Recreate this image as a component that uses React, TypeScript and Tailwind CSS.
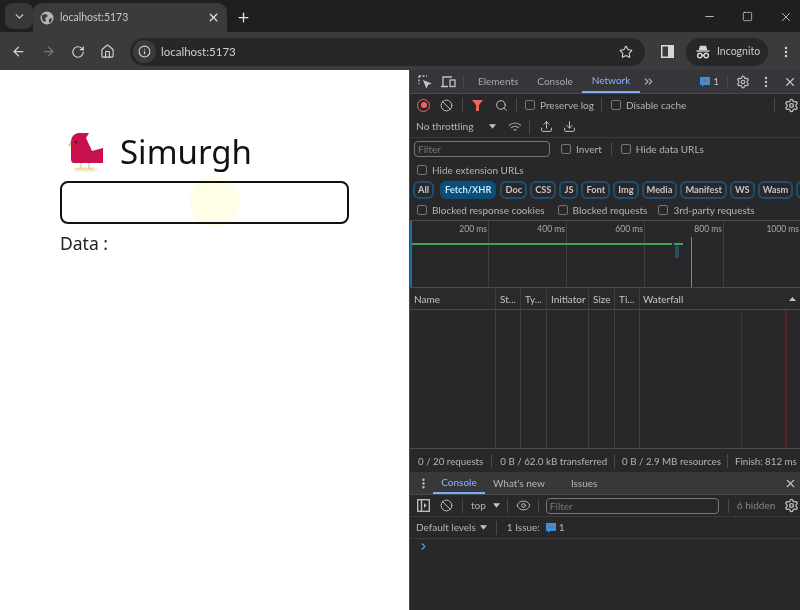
import React from 'react';
import {
  ArrowLeft, ArrowRight, RotateCw, Home, Info, Star, X, Plus, ChevronDown, Minus, Square,
  EllipsisVertical, Settings, Ban, Search, Upload, Download, Eye, ChevronRight,
  ChevronsRight,
} from 'lucide-react';

function Check({ label, className = '' }: { label: string; className?: string }) {
  return (
    <div className={`flex items-center gap-[5px] text-[10px] text-[#b4b4b6] whitespace-nowrap ${className}`}>
      <span className="w-[10px] h-[10px] rounded-[2px] border border-[#77777a] shrink-0"></span>
      <span>{label}</span>
    </div>
  );
}

function Sep({ className = 'h-[16px]' }: { className?: string }) {
  return <span className={`w-px bg-[#4a4a4d] shrink-0 ${className}`}></span>;
}

function Chip({ label, active }: { label: string; active?: boolean }) {
  return (
    <span
      className={`shrink-0 h-[18px] px-[3px] flex items-center rounded-[6px] border-2 text-[9.25px] font-bold ${
        active ? 'border-[#0a4f78] bg-[#0a4f78] text-[#c8e4f8] ml-[3px] mr-[1px]' : 'border-[#1d506f] text-[#c4c4c6]'
      }`}
    >
      {label}
    </span>
  );
}

function Caret({ className = '' }: { className?: string }) {
  return (
    <svg width="7" height="5" viewBox="0 0 8 5" className={className}>
      <path d="M0 0h8L4 5z" fill="#c4c4c6" />
    </svg>
  );
}

function BubbleIcon() {
  return (
    <svg width="10" height="10" viewBox="0 0 10 10">
      <path d="M0 0h10v8H4L2 10V8H0z" fill="#3f8fd8" />
      <rect x="3" y="3" width="4" height="2" fill="#d83a3a" opacity="0.5" />
    </svg>
  );
}

function Bird() {
  return (
    <svg width="36" height="40" viewBox="0 0 36 40">
      <ellipse cx="18" cy="36.5" rx="13" ry="3" fill="#f7f2cf" />
      <path d="M13 30v6M21 30v6M8 36h9M17 36h9" stroke="#dcc98c" strokeWidth="1.2" />
      <path d="M3 8 L0 12 L3 14z" fill="#e3cf8e" />
      <path d="M3 8 Q4 1 10 0 L21 0 L18 5 L24 18 L35 15 V30 H6 Q3 30 3 26z" fill="#c8104d" />
      <circle cx="8" cy="9" r="1.3" fill="#3a1020" />
    </svg>
  );
}

function FilledGlobe() {
  return (
    <svg width="14" height="14" viewBox="0 0 14 14" className="mr-[6px]">
      <circle cx="7" cy="7" r="6.5" fill="#b4b4b6" />
      <path d="M2 4 L6 3 L8 5 L5 7 L6 10 L4 11 L2 8z M9 8 L12 7 L11 11 L9 12z" fill="#3b3a3d" />
    </svg>
  );
}

function PanelIcon() {
  return (
    <svg width="13" height="13" viewBox="0 0 13 13" className="ml-[16px]">
      <rect x="0.75" y="0.75" width="11.5" height="11.5" fill="none" stroke="#d6d6d8" strokeWidth="1.5" />
      <rect x="7" y="0.75" width="5.5" height="11.5" fill="#d6d6d8" />
    </svg>
  );
}

function TabBar() {
  return (
    <div className="h-[32px] bg-[#1f1e21] flex items-end pl-[5px] text-[#c7c7c9]">
      <div className="w-[28px] h-[26px] mb-[3px] rounded-[8px] bg-[#38373a] flex items-center justify-center">
        <ChevronDown size={13} strokeWidth={2.6} />
      </div>
      <div className="w-[194px] h-[29px] rounded-t-[9px] bg-[#3b3a3d] flex items-center pl-[7px] pr-[7px] text-[10.5px]">
        <FilledGlobe />
        <span>localhost:5173</span>
        <X size={13} strokeWidth={2.2} className="ml-auto text-[#e8e8e8]" />
      </div>
      <Plus size={15} strokeWidth={2} className="ml-[9px] mb-[7px] text-[#e8e8e8]" />
      <div className="ml-auto flex items-center h-[29px] pb-[2px] text-[#dcdcdc]">
        <Minus size={13} strokeWidth={1.5} />
        <Square size={11} strokeWidth={1.5} className="ml-[26px]" />
        <X size={14} strokeWidth={1.4} className="ml-[26px] mr-[7px]" />
      </div>
    </div>
  );
}

function Toolbar() {
  return (
    <div className="h-[38px] bg-[#3b3a3d] flex items-center pl-[11px] pt-[1px] text-[#d6d6d8]">
      <ArrowLeft size={15} strokeWidth={2} />
      <ArrowRight size={15} strokeWidth={2} className="ml-[15px] text-[#77777a]" />
      <RotateCw size={14} strokeWidth={2} className="ml-[15px]" />
      <Home size={15} strokeWidth={1.8} className="ml-[15px]" />
      <div className="ml-[15px] w-[515px] h-[28px] rounded-full bg-[#272629] flex items-center pl-[3px] pr-[12px]">
        <span className="w-[23px] h-[23px] rounded-full bg-[#3b3a3d] flex items-center justify-center">
          <Info size={13} strokeWidth={2} />
        </span>
        <span className="ml-[5px] text-[11.5px] text-[#d0d0d2]">localhost:5173</span>
        <Star size={14} strokeWidth={1.8} className="ml-auto" />
      </div>
      <PanelIcon />
      <div className="ml-[12px] w-[82px] h-[28px] rounded-full bg-[#272629] flex items-center pl-[10px] text-[10.5px]">
        <svg width="14" height="14" viewBox="0 0 14 14" fill="none" stroke="#d6d6d8" strokeWidth="1.4">
          <path d="M3.5 5 L4.5 1.5 H9.5 L10.5 5" fill="#d6d6d8" />
          <path d="M0.5 6 H13.5" />
          <circle cx="3.8" cy="10.5" r="2.2" />
          <circle cx="10.2" cy="10.5" r="2.2" />
          <path d="M6 10.5 H8" />
        </svg>
        <span className="ml-[7px] text-[#c9c9cb]">Incognito</span>
      </div>
      <EllipsisVertical size={14} strokeWidth={2.2} className="ml-[11px]" />
    </div>
  );
}

function PageContent() {
  return (
    <div className="relative w-[409px] h-full bg-white pl-[60px] pt-[56px] text-black" style={{ fontFamily: '"Noto Sans", sans-serif' }}>
      <div className="flex items-start h-[55px]">
        <div className="ml-[8px] mt-[7px]">
          <Bird />
        </div>
        <span className="ml-[16px] mt-[1px] text-[33px] leading-[50px] text-[#111]">Simurgh</span>
      </div>
      <div className="w-[289px] h-[43px] rounded-[8px] border-2 border-[#111] bg-transparent"></div>
      <div className="mt-[6px] text-[17.5px] leading-[26px] text-[#222]">Data :</div>
      {/* click highlight from the recording */}
      <div className="absolute left-[190px] top-[106px] w-[50px] h-[50px] rounded-full bg-[#fefee6] mix-blend-multiply"></div>
    </div>
  );
}

function DevtoolsHeader() {
  return (
    <div className="h-[24px] bg-[#36363a] flex items-center pl-[8px] pr-[3px] text-[10px] text-[#a9a9ab] border-b border-[#4a4a4d] shrink-0">
      <svg width="14" height="14" viewBox="0 0 14 14" fill="none" stroke="#c4c4c6" strokeWidth="1.3">
        <path d="M1 1h8M1 1v8" strokeDasharray="2 1.5" />
        <path d="M6 6l6 2.5-2.5 1-1 2.5z" fill="#c4c4c6" />
      </svg>
      <svg width="15" height="14" viewBox="0 0 15 14" fill="none" stroke="#c4c4c6" strokeWidth="1.3" className="ml-[9px]">
        <path d="M2 11V2h9M0 11.5h7" />
        <rect x="9" y="5" width="5" height="6.5" />
      </svg>
      <Sep className="ml-[7px] h-[14px]" />
      <span className="ml-[14px]">Elements</span>
      <span className="ml-[19px]">Console</span>
      <div className="ml-[9px] h-full px-[10px] flex items-center text-[#8ab4f8] border-b-2 border-[#7cacf8]">Network</div>
      <ChevronsRight size={13} className="ml-[2px] text-[#b4b4b6]" />
      <HeaderRight />
    </div>
  );
}

function HeaderRight() {
  return (
    <div className="ml-auto flex items-center text-[#c4c4c6]">
      <BubbleIcon />
      <span className="ml-[3px] text-[10px]">1</span>
      <Sep className="ml-[8px] h-[14px]" />
      <Settings size={14} className="ml-[8px]" />
      <EllipsisVertical size={14} strokeWidth={2.2} className="ml-[9px]" />
      <X size={14} className="ml-[10px]" />
    </div>
  );
}

function NetworkFilters() {
  return (
    <div className="shrink-0 text-[#b4b4b6]">
      <div className="h-[22px] flex items-center pl-[7px]">
        <span className="w-[13px] h-[13px] rounded-full border-[1.5px] border-[#e46962] flex items-center justify-center">
          <span className="w-[6px] h-[6px] rounded-full bg-[#e46962]"></span>
        </span>
        <Ban size={13} strokeWidth={1.7} className="ml-[10px] text-[#c4c4c6]" />
        <Sep className="ml-[9px] h-[14px]" />
        <svg width="11" height="11" viewBox="0 0 11 11" className="ml-[9px]">
          <path d="M0 0h11L7 5v6H4V5z" fill="#e46962" />
        </svg>
        <Search size={13} strokeWidth={1.8} className="ml-[12px] text-[#c4c4c6]" />
        <Sep className="ml-[8px] h-[14px]" />
        <Check label="Preserve log" className="ml-[8px]" />
        <Sep className="ml-[7px] h-[14px]" />
        <Check label="Disable cache" className="ml-[9px]" />
        <Sep className="ml-auto h-[14px]" />
        <Settings size={15} className="ml-[9px] mr-px text-[#c4c4c6]" />
      </div>
      <div className="h-[22px] flex items-center pl-[6px] text-[10.25px] border-b border-[#3a3a3d]">
        <span>No throttling</span>
        <Caret className="ml-[15px]" />
        <svg width="14" height="12" viewBox="0 0 14 12" fill="none" stroke="#a0a0a2" strokeWidth="1.1" className="ml-[12px]">
          <path d="M1 4.5Q7-.5 13 4.5M3 7Q7 3.5 11 7M5.5 9.3Q7 8 8.5 9.3" />
        </svg>
        <Sep className="ml-[7px] h-[14px]" />
        <Upload size={13} strokeWidth={1.8} className="ml-[10px] text-[#c4c4c6]" />
        <Download size={13} strokeWidth={1.8} className="ml-[10px] text-[#c4c4c6]" />
      </div>
      <div className="h-[22px] flex items-center pl-[4px]">
        <div className="w-[136px] h-[16px] rounded-[4px] border border-[#77777a] pl-[3px] text-[10px] leading-[14px] text-[#77777a]">Filter</div>
        <Check label="Invert" className="ml-[11px]" />
        <Sep className="ml-[9px] h-[14px]" />
        <Check label="Hide data URLs" className="ml-[9px]" />
      </div>
      <div className="h-[20px] flex items-center pl-[7px]">
        <Check label="Hide extension URLs" />
      </div>
      <div className="h-[20px] flex items-center pl-[3px] gap-[3px] overflow-hidden">
        <Chip label="All" />
        <Chip label="Fetch/XHR" active />
        <Chip label="Doc" />
        <Chip label="CSS" />
        <Chip label="JS" />
        <Chip label="Font" />
        <Chip label="Img" />
        <Chip label="Media" />
        <Chip label="Manifest" />
        <Chip label="WS" />
        <Chip label="Wasm" />
        <span className="shrink-0 w-[20px] h-[18px] rounded-[6px] border-2 border-[#1d506f]"></span>
      </div>
      <div className="h-[21px] flex items-center pl-[7px] border-b border-[#4a4a4d]">
        <Check label="Blocked response cookies" />
        <Check label="Blocked requests" className="ml-[13px]" />
        <Check label="3rd-party requests" className="ml-[11px]" />
      </div>
    </div>
  );
}

function Overview() {
  const marks = [
    { label: '200 ms', line: 79 },
    { label: '400 ms', line: 157 },
    { label: '600 ms', line: 235 },
    { label: '800 ms', line: 314 },
    { label: '1000 ms', line: 391 },
  ];
  return (
    <div className="relative h-[67px] shrink-0 bg-[#28282b] border-b border-[#4a4a4d] overflow-hidden">
      {marks.map((m) => (
        <div key={m.label} className="absolute top-0 bottom-0 w-px bg-[#3f3f42]" style={{ left: m.line - 1 }}>
          <span className="absolute right-[2px] top-[2px] text-[8.5px] leading-[13px] whitespace-nowrap text-[#a9a9ab]">{m.label}</span>
        </div>
      ))}
      <div className="absolute left-0 top-0 bottom-0 w-[2px] bg-[#1a6fa5]"></div>
      <div className="absolute left-[2px] top-[22px] w-[260px] h-[2px] bg-[#3da35d]"></div>
      <div className="absolute left-[264px] top-[22px] w-[9px] h-[2px] bg-[#3da35d]"></div>
      <div className="absolute left-[265px] top-[25px] w-[4px] h-[12px] bg-[#2b4d66]"></div>
      <div className="absolute left-[281px] top-[16px] bottom-0 w-px bg-[#4f97c5]"></div>
    </div>
  );
}

const columns = [
  { label: 'Name', w: 'w-[86px]' },
  { label: 'St...', w: 'w-[25px]' },
  { label: 'Ty...', w: 'w-[26px]' },
  { label: 'Initiator', w: 'w-[42px]' },
  { label: 'Size', w: 'w-[26px]' },
  { label: 'Ti...', w: 'w-[25px]' },
];

function RequestTable() {
  return (
    <div className="flex-1 flex flex-col min-h-0">
      <div className="h-[22px] pt-px flex items-center text-[10px] text-[#c4c4c6] bg-[#2a2a2d] border-b border-[#4a4a4d] shrink-0">
        {columns.map((c) => (
          <div key={c.label} className={`${c.w} h-full flex items-center pl-[4px] border-r border-[#3f3f42] whitespace-nowrap overflow-hidden`}>
            {c.label}
          </div>
        ))}
        <div className="flex-1 flex items-center pl-[3px]">
          Waterfall
          <svg width="7" height="4" viewBox="0 0 7 4" className="ml-auto mr-[4px]">
            <path d="M3.5 0L7 4H0z" fill="#c4c4c6" />
          </svg>
        </div>
      </div>
      <div className="flex-1 flex">
        {columns.map((c) => (
          <div key={c.label} className={`${c.w} border-r border-[#3f3f42]`}></div>
        ))}
        <div className="flex-1 flex">
          <div className="w-[102px] border-r border-[#38383b]"></div>
          <div className="w-[45px] border-r-2 border-[#6e1f24]"></div>
        </div>
      </div>
    </div>
  );
}

function StatusBar() {
  return (
    <div className="h-[24px] pt-px shrink-0 flex items-center pl-[8px] text-[9.75px] text-[#b4b4b6] border-t border-[#4a4a4d] whitespace-nowrap">
      <span>0 / 20 requests</span>
      <Sep className="ml-[8px] h-[14px]" />
      <span className="ml-[8px]">0 B / 62.0 kB transferred</span>
      <Sep className="ml-[7px] h-[14px]" />
      <span className="ml-[7px]">0 B / 2.9 MB resources</span>
      <Sep className="ml-[6px] h-[14px]" />
      <span className="ml-[7px]">Finish: 812 ms</span>
    </div>
  );
}

function DockIcon() {
  return (
    <svg width="13" height="13" viewBox="0 0 13 13" fill="none" stroke="#c4c4c6" strokeWidth="1.3">
      <rect x="0.7" y="0.7" width="11.6" height="11.6" />
      <path d="M4.5 0.7V12.3" />
      <path d="M7 4l2.5 2.5L7 9z" fill="#c4c4c6" stroke="none" />
    </svg>
  );
}

function Drawer() {
  return (
    <div className="h-[138px] shrink-0 flex flex-col text-[#b4b4b6]">
      <div className="h-[23px] bg-[#38383b] flex items-center text-[10px] border-b border-[#4a4a4d] shrink-0">
        <EllipsisVertical size={13} strokeWidth={2.4} className="ml-[7px] text-[#c4c4c6]" />
        <div className="ml-[3px] h-full w-[52px] flex items-center justify-center text-[#8ab4f8] border-b-2 border-[#7cacf8]">Console</div>
        <span className="ml-[8px]">What's new</span>
        <span className="ml-[26px]">Issues</span>
        <X size={13} className="ml-auto mr-[3px] text-[#c4c4c6]" />
      </div>
      <div className="h-[22px] flex items-center pl-[7px] text-[10px] border-b border-[#3a3a3d] shrink-0 whitespace-nowrap">
        <DockIcon />
        <Ban size={13} strokeWidth={1.7} className="ml-[10px] text-[#c4c4c6]" />
        <Sep className="ml-[9px] h-[14px]" />
        <span className="ml-[8px]">top</span>
        <Caret className="ml-[7px]" />
        <Sep className="ml-[7px] h-[14px]" />
        <Eye size={15} strokeWidth={1.5} className="ml-[8px] text-[#c4c4c6]" />
        <Sep className="ml-[7px] h-[14px]" />
        <div className="ml-[7px] w-[173px] h-[16px] shrink-0 rounded-[4px] border border-[#77777a] pl-[3px] text-[10px] leading-[14px] text-[#77777a]">Filter</div>
        <Sep className="ml-[9px] h-[14px]" />
        <span className="ml-[8px] text-[#868688]">6 hidden</span>
        <Settings size={15} className="ml-auto mr-px text-[#c4c4c6]" />
      </div>
      <div className="h-[22px] flex items-center pl-[6px] text-[10px] border-b border-[#3a3a3d] shrink-0">
        <span>Default levels</span>
        <Caret className="ml-[4px]" />
        <Sep className="ml-[9px] h-[14px]" />
        <span className="ml-[10px]">1 Issue:</span>
        <span className="ml-[6px]">
          <BubbleIcon />
        </span>
        <span className="ml-[3px]">1</span>
      </div>
      <div className="pl-[8px] pt-[2px]">
        <ChevronRight size={11} strokeWidth={2.4} className="text-[#5aa3e0]" />
      </div>
    </div>
  );
}

export default function App() {
  return (
    <div className="w-[800px] h-[610px] flex flex-col overflow-hidden bg-white" style={{ fontFamily: 'Lato, "Noto Sans", sans-serif' }}>
      <TabBar />
      <Toolbar />
      <div className="flex-1 flex min-h-0">
        <PageContent />
        <div className="w-[391px] flex flex-col bg-[#28282b] border-l border-[#4a4a4d]">
          <DevtoolsHeader />
          <NetworkFilters />
          <Overview />
          <RequestTable />
          <StatusBar />
          <Drawer />
        </div>
      </div>
    </div>
  );
}
